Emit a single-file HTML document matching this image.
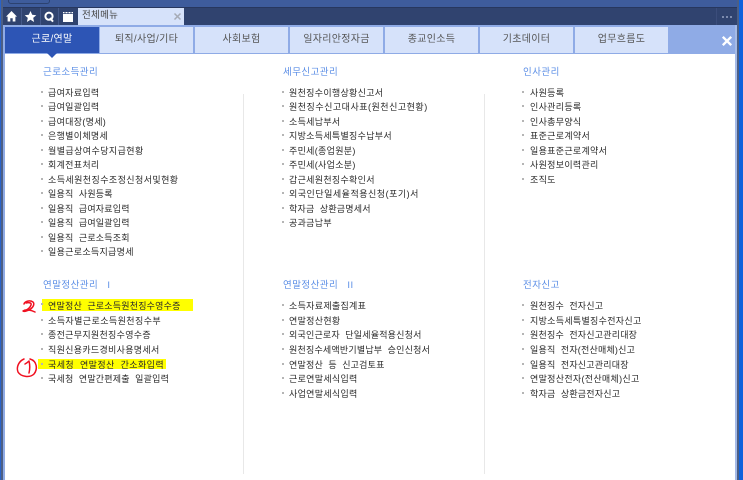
<!DOCTYPE html>
<html lang="ko">
<head>
<meta charset="utf-8">
<style>
html,body{margin:0;padding:0;background:#fff}
body{position:relative;width:743px;height:480px;overflow:hidden;font-family:"Liberation Sans","Noto Sans CJK KR","NanumGothic",sans-serif;color:#333}
.a{position:absolute}
.tab{position:absolute;top:27px;height:26px;width:93px;background:#d6e2fa;color:#555;font-size:10px;line-height:25px;text-align:center;letter-spacing:.3px;border-right:2px solid #8fabe6}
.h{position:absolute;margin-top:1px;font-size:9.5px;line-height:12px;color:#5b8ee6;white-space:pre;letter-spacing:.45px}
.i{position:absolute;margin-top:1px;font-size:9px;line-height:12px;color:#2a2a2a;white-space:pre;letter-spacing:.3px}
.s{letter-spacing:.2px}
.w{letter-spacing:.42px}
.x{letter-spacing:.5px}
.b{position:absolute;width:2px;height:2px;background:#b5b5b5}
.vl{position:absolute;top:94px;width:1px;height:380px;background:#e8e8e8}
.hl{position:absolute;background:#ffff00}
</style>
</head>
<body>
<!-- outer frame -->
<div class="a" style="left:0;top:0;width:1px;height:480px;background:#2a62c8"></div>
<div class="a" style="left:1px;top:0;width:2px;height:480px;background:#4c5f85"></div>
<div class="a" style="left:3px;top:25px;width:2px;height:455px;background:#8fabe6"></div>
<div class="a" style="left:735px;top:25px;width:2px;height:455px;background:#a5bbe8"></div>
<div class="a" style="left:737px;top:0;width:2px;height:480px;background:#4c5f85"></div>
<div class="a" style="left:739px;top:0;width:4px;height:480px;background:#0f62dc"></div>

<!-- top bars -->
<div class="a" style="left:3px;top:0;width:734px;height:7px;background:#3e5c9c"></div>
<div class="a" style="left:8px;top:-3px;width:40px;height:5px;border:1px solid #2c4270;border-radius:3px"></div>
<div class="a" style="left:3px;top:7px;width:734px;height:18px;background:#30436f;border-top:1px solid #27375e;box-sizing:border-box"></div>
<div class="a" style="left:21px;top:8px;width:1px;height:17px;background:#45598a"></div>
<div class="a" style="left:40px;top:8px;width:1px;height:17px;background:#45598a"></div>
<div class="a" style="left:58px;top:8px;width:1px;height:17px;background:#45598a"></div>
<div class="a" style="left:716px;top:8px;width:1px;height:17px;background:#3b4d7b"></div>

<!-- toolbar icons -->
<svg class="a" style="left:0;top:8px" width="78" height="17" viewBox="0 0 78 17">
<path d="M11.5 3 L6 8.6 H7.6 V13.5 H10.3 V10.3 H12.7 V13.5 H15.4 V8.6 H17 Z" fill="#fff"/>
<path d="M30.5 3 L32.2 6.8 L36.3 7.2 L33.2 9.9 L34.1 14 L30.5 11.8 L26.9 14 L27.8 9.9 L24.7 7.2 L28.8 6.8 Z" fill="#fff"/>
<circle cx="49" cy="8.2" r="3.6" fill="none" stroke="#fff" stroke-width="2"/>
<path d="M50 10 L53 13.6" stroke="#fff" stroke-width="2" fill="none"/>
<rect x="63" y="6" width="10" height="8" fill="#fff"/>
<rect x="63" y="4" width="10" height="1.3" fill="#fff"/>
<path d="M65 3.5V6 M68 3.5V6 M71 3.5V6" stroke="#30436f" stroke-width="1"/>
</svg>

<!-- open tab -->
<div class="a" style="left:78px;top:8px;width:106px;height:17px;background:#d6e2fa"></div>
<div class="a" style="left:82px;top:8px;font-size:9.5px;line-height:16px;color:#444;white-space:pre;letter-spacing:.3px">전체메뉴</div>
<svg class="a" style="left:173px;top:12px" width="9" height="9" viewBox="0 0 9 9"><path d="M1.5 1.5 L7.5 7.5 M7.5 1.5 L1.5 7.5" stroke="#a5aab5" stroke-width="1.5"/></svg>

<!-- dots -->
<div class="a" style="left:722px;top:16px;width:2px;height:2px;background:#7c8bae"></div>
<div class="a" style="left:726px;top:16px;width:2px;height:2px;background:#7c8bae"></div>
<div class="a" style="left:730px;top:16px;width:2px;height:2px;background:#7c8bae"></div>

<!-- tab bar -->
<div class="a" style="left:5px;top:25px;width:730px;height:29px;background:#8fabe6"></div>
<div class="a" style="left:5px;top:27px;width:94px;height:26px;background:#2d55b5;color:#fff;font-size:10px;line-height:25px;text-align:center;letter-spacing:.3px">근로/연말</div>
<div class="a" style="left:47px;top:53px;width:0;height:0;border-left:5px solid transparent;border-right:5px solid transparent;border-top:5px solid #2d55b5;z-index:2"></div>
<div class="tab" style="left:100px">퇴직/사업/기타</div>
<div class="tab" style="left:195px">사회보험</div>
<div class="tab" style="left:290px">일자리안정자금</div>
<div class="tab" style="left:385px">종교인소득</div>
<div class="tab" style="left:480px">기초데이터</div>
<div class="tab" style="left:575px">업무흐름도</div>
<svg class="a" style="left:721px;top:35px" width="12" height="12" viewBox="0 0 12 12"><path d="M1.8 1.8 L10.2 10.2 M10.2 1.8 L1.8 10.2" stroke="#fff" stroke-width="2.4"/></svg>

<!-- separators -->
<div class="vl" style="left:243px"></div>
<div class="vl" style="left:484px"></div>

<!-- highlights -->
<div class="hl" style="left:42px;top:299px;width:151px;height:12px"></div>
<div class="hl" style="left:38px;top:359px;width:128px;height:10px"></div>

<!-- column 1 -->
<div class="h" style="left:43px;top:66px">근로소득관리</div>
<div class="b" style="left:41px;top:91px"></div><div class="i" style="left:48px;top:86px">급여자료입력</div>
<div class="b" style="left:41px;top:105px"></div><div class="i" style="left:48px;top:100px">급여일괄입력</div>
<div class="b" style="left:41px;top:120px"></div><div class="i" style="left:48px;top:115px">급여대장(명세)</div>
<div class="b" style="left:41px;top:134px"></div><div class="i" style="left:48px;top:129px">은행별이체명세</div>
<div class="b" style="left:41px;top:149px"></div><div class="i w" style="left:48px;top:144px">월별급상여수당지급현황</div>
<div class="b" style="left:41px;top:163px"></div><div class="i" style="left:48px;top:158px">회계전표처리</div>
<div class="b" style="left:41px;top:178px"></div><div class="i w" style="left:48px;top:173px">소득세원천징수조정신청서및현황</div>
<div class="b" style="left:41px;top:192px"></div><div class="i s" style="left:48px;top:187px">일용직  사원등록</div>
<div class="b" style="left:41px;top:207px"></div><div class="i s" style="left:48px;top:202px">일용직  급여자료입력</div>
<div class="b" style="left:41px;top:221px"></div><div class="i s" style="left:48px;top:216px">일용직  급여일괄입력</div>
<div class="b" style="left:41px;top:236px"></div><div class="i s" style="left:48px;top:231px">일용직  근로소득조회</div>
<div class="b" style="left:41px;top:250px"></div><div class="i" style="left:48px;top:245px">일용근로소득지급명세</div>

<div class="h" style="left:43px;top:279px">연말정산관리   I</div>
<div class="b" style="left:41px;top:303px"></div><div class="i s" style="left:48px;top:299px">연말정산  근로소득원천징수영수증</div>
<div class="b" style="left:41px;top:319px"></div><div class="i w" style="left:48px;top:314px">소득자별근로소득원천징수부</div>
<div class="b" style="left:41px;top:333px"></div><div class="i" style="left:48px;top:328px">종전근무지원천징수영수증</div>
<div class="b" style="left:41px;top:348px"></div><div class="i" style="left:48px;top:343px">직원신용카드경비사용명세서</div>
<div class="b" style="left:41px;top:363px"></div><div class="i w" style="left:48px;top:358px">국세청  연말정산  간소화입력</div>
<div class="b" style="left:41px;top:377px"></div><div class="i s" style="left:48px;top:372px">국세청  연말간편제출  일괄입력</div>

<!-- column 2 -->
<div class="h" style="left:283px;top:66px">세무신고관리</div>
<div class="b" style="left:282px;top:91px"></div><div class="i" style="left:289px;top:86px">원천징수이행상황신고서</div>
<div class="b" style="left:282px;top:105px"></div><div class="i x" style="left:289px;top:100px">원천징수신고대사표(원천신고현황)</div>
<div class="b" style="left:282px;top:120px"></div><div class="i" style="left:289px;top:115px">소득세납부서</div>
<div class="b" style="left:282px;top:134px"></div><div class="i" style="left:289px;top:129px">지방소득세특별징수납부서</div>
<div class="b" style="left:282px;top:149px"></div><div class="i" style="left:289px;top:144px">주민세(종업원분)</div>
<div class="b" style="left:282px;top:163px"></div><div class="i" style="left:289px;top:158px">주민세(사업소분)</div>
<div class="b" style="left:282px;top:178px"></div><div class="i" style="left:289px;top:173px">갑근세원천징수확인서</div>
<div class="b" style="left:282px;top:192px"></div><div class="i x" style="left:289px;top:187px">외국인단일세율적용신청(포기)서</div>
<div class="b" style="left:282px;top:207px"></div><div class="i s" style="left:289px;top:202px">학자금  상환금명세서</div>
<div class="b" style="left:282px;top:221px"></div><div class="i" style="left:289px;top:216px">공과금납부</div>

<div class="h" style="left:283px;top:279px">연말정산관리   II</div>
<div class="b" style="left:282px;top:304px"></div><div class="i" style="left:289px;top:299px">소득자료제출집계표</div>
<div class="b" style="left:282px;top:319px"></div><div class="i" style="left:289px;top:314px">연말정산현황</div>
<div class="b" style="left:282px;top:333px"></div><div class="i s" style="left:289px;top:328px">외국인근로자  단일세율적용신청서</div>
<div class="b" style="left:282px;top:348px"></div><div class="i s" style="left:289px;top:343px">원천징수세액반기별납부  승인신청서</div>
<div class="b" style="left:282px;top:363px"></div><div class="i s" style="left:289px;top:358px">연말정산  등  신고검토표</div>
<div class="b" style="left:282px;top:377px"></div><div class="i" style="left:289px;top:372px">근로연말세식입력</div>
<div class="b" style="left:282px;top:392px"></div><div class="i" style="left:289px;top:387px">사업연말세식입력</div>

<!-- column 3 -->
<div class="h" style="left:523px;top:66px">인사관리</div>
<div class="b" style="left:522px;top:91px"></div><div class="i" style="left:530px;top:86px">사원등록</div>
<div class="b" style="left:522px;top:105px"></div><div class="i" style="left:530px;top:100px">인사관리등록</div>
<div class="b" style="left:522px;top:120px"></div><div class="i" style="left:530px;top:115px">인사총무양식</div>
<div class="b" style="left:522px;top:134px"></div><div class="i" style="left:530px;top:129px">표준근로계약서</div>
<div class="b" style="left:522px;top:149px"></div><div class="i" style="left:530px;top:144px">일용표준근로계약서</div>
<div class="b" style="left:522px;top:163px"></div><div class="i" style="left:530px;top:158px">사원정보이력관리</div>
<div class="b" style="left:522px;top:178px"></div><div class="i" style="left:530px;top:173px">조직도</div>

<div class="h" style="left:523px;top:279px">전자신고</div>
<div class="b" style="left:522px;top:304px"></div><div class="i s" style="left:530px;top:299px">원천징수  전자신고</div>
<div class="b" style="left:522px;top:319px"></div><div class="i" style="left:530px;top:314px">지방소득세특별징수전자신고</div>
<div class="b" style="left:522px;top:333px"></div><div class="i s" style="left:530px;top:328px">원천징수  전자신고관리대장</div>
<div class="b" style="left:522px;top:348px"></div><div class="i s" style="left:530px;top:343px">일용직  전자(전산매체)신고</div>
<div class="b" style="left:522px;top:363px"></div><div class="i s" style="left:530px;top:358px">일용직  전자신고관리대장</div>
<div class="b" style="left:522px;top:377px"></div><div class="i" style="left:530px;top:372px">연말정산전자(전산매체)신고</div>
<div class="b" style="left:522px;top:392px"></div><div class="i s" style="left:530px;top:387px">학자금  상환금전자신고</div>

<!-- red annotations -->
<svg class="a" style="left:0;top:290px" width="50" height="100" viewBox="0 0 50 100" fill="none" stroke="#f01020" stroke-width="1.5" stroke-linecap="round" stroke-linejoin="round">
<path d="M24 14 C25 11 30 10 33 12 C35 14 33 18 29 20 C26 21 24 22 23 21 C26 19 31 20 35 22"/>
<path d="M26 13 C29 12 32 13 31 15 C30 18 27 20 24 21"/>
<path d="M24 69 C19 71 16 77 18 82 C21 87 30 88 34 84 C38 79 37 71 30 69"/>
<path d="M25 74 C27 73 28 72 29 71 C30 75 30 79 29 83"/>
</svg>
</body>
</html>
